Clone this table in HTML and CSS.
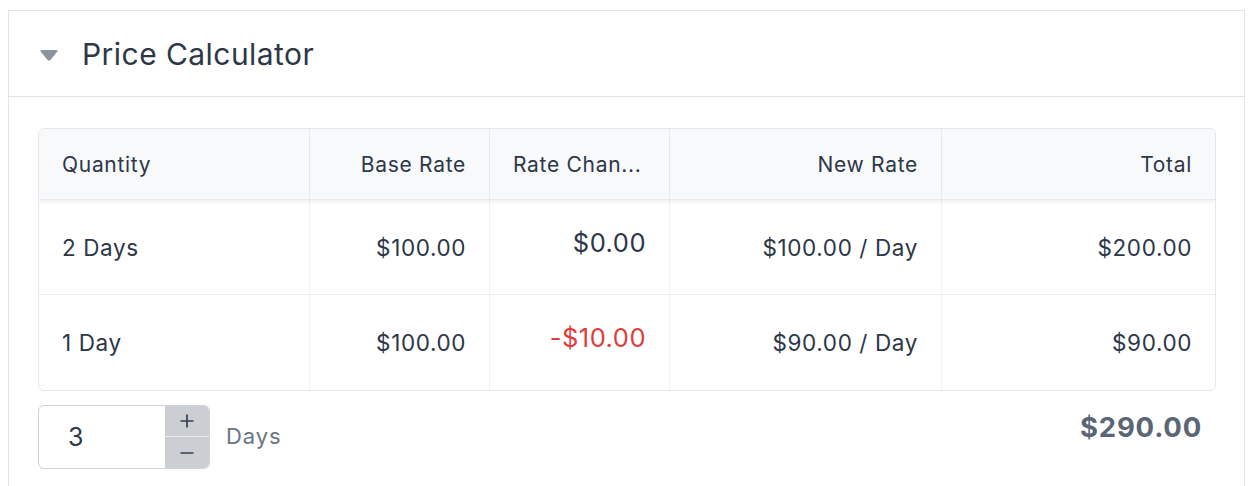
FILE: index.html
```html
<!DOCTYPE html>
<html>
<head>
<meta charset="utf-8">
<link rel="stylesheet" href="styles.css">
</head>
<body>
<section class="panel">
  <header class="panel-head">
    <svg class="caret" width="20" height="14" viewBox="0 0 20 14"><path d="M2.6 2 H17.4 Q19.4 2 18.2 3.8 L11.4 12 Q10 13.6 8.6 12 L1.8 3.8 Q0.6 2 2.6 2 Z" fill="#8a939f"/></svg>
    <h2 class="title">Price Calculator</h2>
  </header>
  <div class="panel-body">
    <div class="table">
      <div class="row head">
        <div class="cell">Quantity</div>
        <div class="cell right">Base Rate</div>
        <div class="cell">Rate Chan...</div>
        <div class="cell right">New Rate</div>
        <div class="cell right">Total</div>
      </div>
      <div class="row">
        <div class="cell">2 Days</div>
        <div class="cell right">$100.00</div>
        <div class="cell right change">$0.00</div>
        <div class="cell right">$100.00 / Day</div>
        <div class="cell right">$200.00</div>
      </div>
      <div class="row last">
        <div class="cell">1 Day</div>
        <div class="cell right">$100.00</div>
        <div class="cell right change neg">-$10.00</div>
        <div class="cell right">$90.00 / Day</div>
        <div class="cell right">$90.00</div>
      </div>
    </div>
    <div class="footer">
      <div class="qty">
        <div class="qty-input">3</div>
        <div class="stepper">
          <div class="step"><svg width="16" height="16" viewBox="0 0 16 16"><path d="M8 1.5 V14.5 M1.5 8 H14.5" stroke="#344050" stroke-width="1.7"/></svg></div>
          <div class="step minus"><svg width="16" height="16" viewBox="0 0 16 16"><path d="M1.5 8 H14.5" stroke="#344050" stroke-width="1.7"/></svg></div>
        </div>
      </div>
      <span class="unit">Days</span>
      <span class="grand">$290.00</span>
    </div>
  </div>
</section>
</body>
</html>
```
FILE: styles.css
```css
* { box-sizing: border-box; }
body {
  margin: 10px 7px 0 8px;
  font-family: "Inter", "Noto Sans", sans-serif;
  color: #2d3748;
  background: #fff;
}
.panel {
  border: 1px solid #e4e4e4;
  border-bottom: none;
  height: 476px;
}
.panel-head {
  height: 86px;
  border-bottom: 1px solid #e4e4e4;
  display: flex;
  align-items: center;
  padding-left: 30px;
}
.caret { margin-right: 23px; margin-top: 2px; }
.title {
  margin: 0;
  font-size: 30px;
  font-weight: 400;
  color: #2d3748;
  letter-spacing: 0.45px;
}
.panel-body { padding: 31px 28px 0 29px; }
.table {
  border: 1px solid #e6e6e6;
  border-radius: 6px;
  overflow: hidden;
}
.row {
  display: grid;
  grid-template-columns: 271px 180px 180px 272px 1fr;
  height: 95px;
  border-bottom: 1px solid #ececec;
}
.row.last { border-bottom: none; height: 95px; }
.row.head {
  height: 71px;
  background: #f8f9fa;
  border-bottom: 1px solid #e9eaef;
  box-shadow: 0 2px 3px rgba(60, 70, 110, 0.08);
  position: relative;
}
.cell {
  display: flex;
  align-items: center;
  padding: 0 23px;
  font-size: 22.5px;
  letter-spacing: 0.6px;
  border-right: 1px solid #f1f1f1;
}
.row.head .cell { font-size: 21px; letter-spacing: 0.7px; border-right-color: #e9e9e9; }
.cell:last-child { border-right: none; }
.cell.right { justify-content: flex-end; }
.change { font-size: 25.5px; letter-spacing: 0.5px; padding-bottom: 10px; }
.neg { color: #e03c3c; }
.footer {
  display: flex;
  align-items: center;
  margin-top: 14px;
  padding-right: 14px;
}
.qty {
  width: 172px;
  height: 64px;
  border: 1px solid #cfd2d6;
  border-radius: 6px;
  overflow: hidden;
  display: flex;
}
.qty-input {
  flex: 1;
  display: flex;
  align-items: center;
  padding-left: 29px;
  font-size: 25px;
  color: #2d3748;
}
.stepper {
  width: 44px;
  display: flex;
  flex-direction: column;
  background: #cbcfd4;
}
.step {
  flex: 1;
  display: flex;
  align-items: center;
  justify-content: center;
}
.step.minus { border-top: 1px solid #e8eaed; padding-top: 2px; }
.unit {
  margin-left: 16px;
  font-size: 22px;
  letter-spacing: 0.9px;
  color: #6b7585;
  margin-top: -3px;
}
.grand {
  margin-left: auto;
  font-size: 27.5px;
  font-weight: 700;
  letter-spacing: 0.8px;
  color: #5a6676;
  margin-top: -20px;
}
```
